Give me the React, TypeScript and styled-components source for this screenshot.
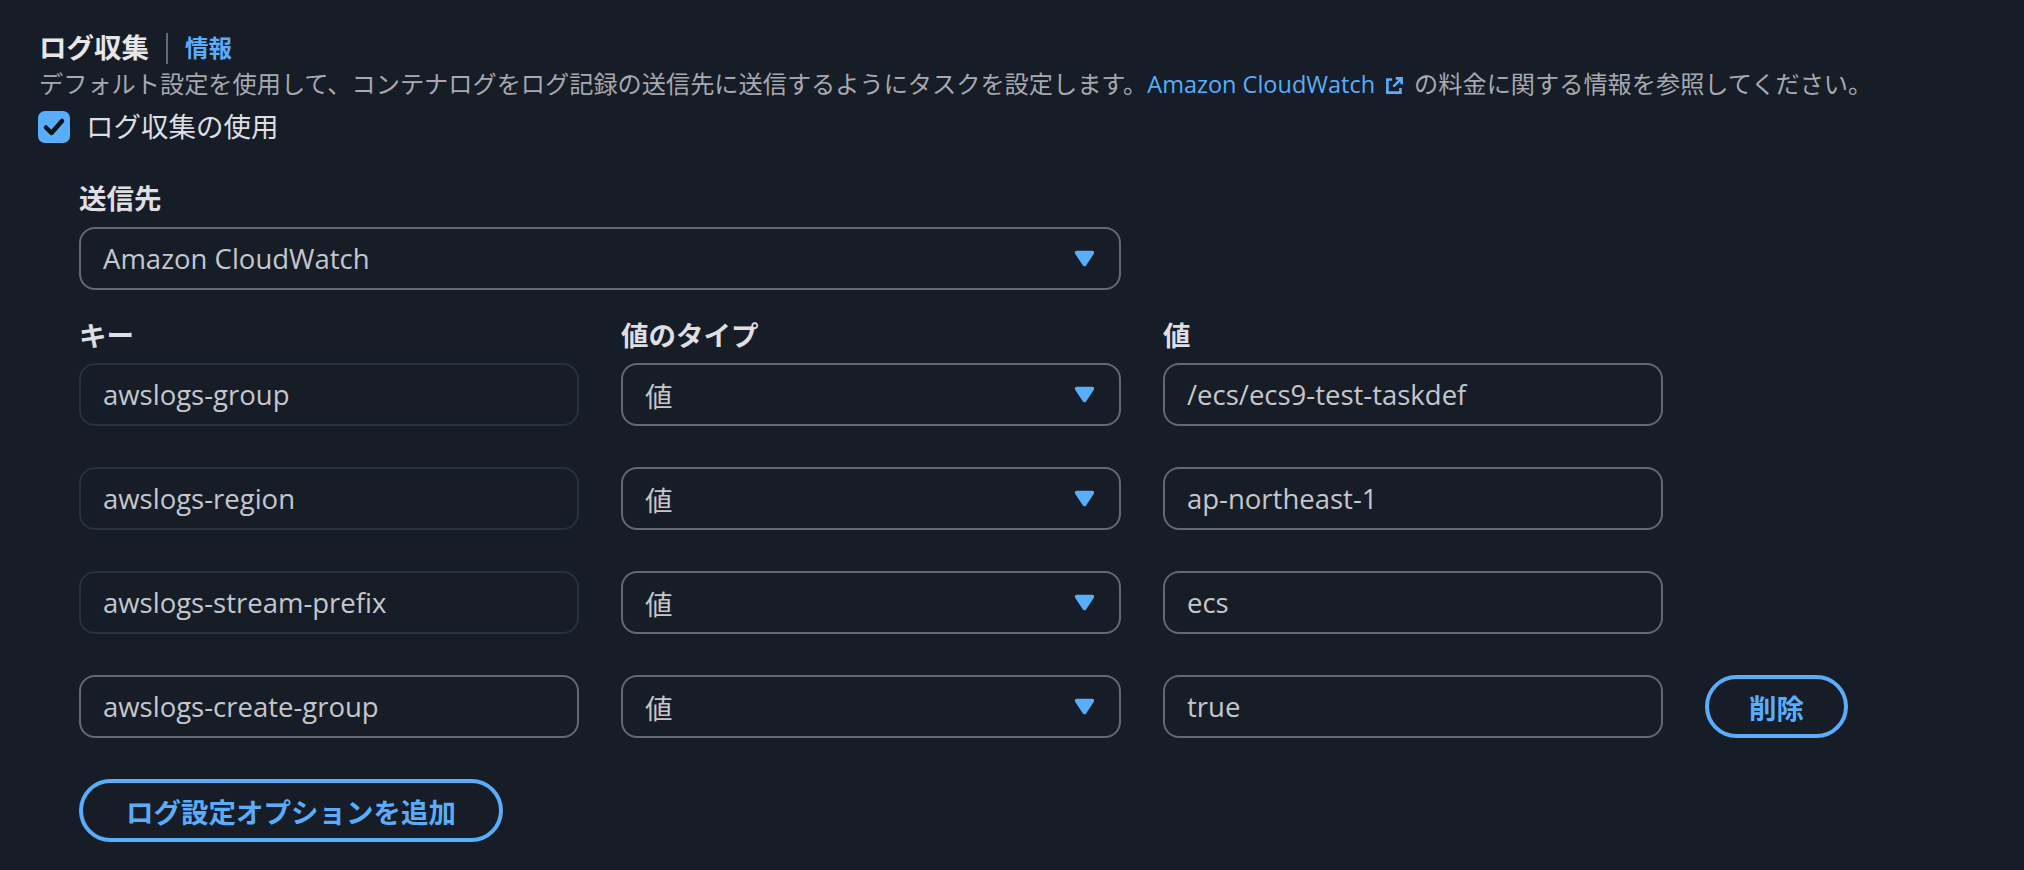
import * as React from 'react'
import styled, { createGlobalStyle } from 'styled-components'

const colors = {
  bg: '#161d26',
  heading: '#e6e6eb',
  label: '#dedee3',
  text: '#c6c6cd',
  secondary: '#a8a8b0',
  border: '#656871',
  borderReadOnly: '#29313c',
  blue: '#58aefc',
  divider: '#5f6b7a',
  check: '#0f141a',
}

const logOptions = [
  { key: 'awslogs-group', value: '/ecs/ecs9-test-taskdef', removable: false },
  { key: 'awslogs-region', value: 'ap-northeast-1', removable: false },
  { key: 'awslogs-stream-prefix', value: 'ecs', removable: false },
  { key: 'awslogs-create-group', value: 'true', removable: true },
]

const CaretDown = () => (
  <CaretIcon viewBox="0 0 16 16" aria-hidden>
    <path d="M4 5h8l-4 6-4-6z" />
  </CaretIcon>
)

const ExternalIcon = () => (
  <ExtIcon viewBox="0 0 16 16" aria-hidden>
    <path d="M9 2h5v5M14 2 7 9M6 3H2v11h11v-4" />
  </ExtIcon>
)

const App = () => (
  <Page>
    <GlobalStyle />
    <HeaderRow>
      <Heading>ログ収集</Heading>
      <InfoDivider />
      <InfoLink>情報</InfoLink>
    </HeaderRow>
    <Description>
      デフォルト設定を使用して、コンテナログをログ記録の送信先に送信するようにタスクを設定します。
      <Link>Amazon CloudWatch</Link>
      <ExternalIcon />
      の料金に関する情報を参照してください。
    </Description>
    <CheckRow>
      <CheckBox>
        <svg viewBox="0 0 32 32" width="32" height="32" aria-hidden>
          <polyline points="8,16.5 13.5,22 24,10" />
        </svg>
      </CheckBox>
      <CheckLabel>ログ収集の使用</CheckLabel>
    </CheckRow>

    <Section>
      <FieldLabel>送信先</FieldLabel>
      <Select wide>
        <span>Amazon CloudWatch</span>
        <CaretDown />
      </Select>

      <LabelGrid>
        <ColumnLabel>キー</ColumnLabel>
        <ColumnLabel>値のタイプ</ColumnLabel>
        <ColumnLabel>値</ColumnLabel>
        <span />
      </LabelGrid>

      <Rows>
        {logOptions.map(opt => (
          <EditorGrid key={opt.key}>
            <Input readOnly={!opt.removable}>{opt.key}</Input>
            <Select>
              <span>値</span>
              <CaretDown />
            </Select>
            <Input>{opt.value}</Input>
            {opt.removable ? <Button>削除</Button> : <span />}
          </EditorGrid>
        ))}
      </Rows>

      <AddButton>ログ設定オプションを追加</AddButton>
    </Section>
  </Page>
)

const GlobalStyle = createGlobalStyle`
  html, body {
    margin: 0;
    background: ${colors.bg};
  }
  body {
    font-family: "Open Sans", "Noto Sans CJK JP", sans-serif;
    color: ${colors.text};
  }
`

const Page = styled.div`
  box-sizing: border-box;
  min-height: 870px;
  padding: 28px 39px 0;
  background: ${colors.bg};
`

const HeaderRow = styled.div`
  display: flex;
  align-items: center;
  height: 40px;
`

const Heading = styled.h2`
  margin: 0;
  font-size: 27.5px;
  font-weight: 700;
  line-height: 40px;
  color: ${colors.heading};
`

const InfoDivider = styled.span`
  width: 2px;
  height: 31px;
  margin: 0 17px 0 17px;
  background: ${colors.divider};
`

const InfoLink = styled.a`
  font-size: 23.5px;
  font-weight: 700;
  line-height: 40px;
  color: ${colors.blue};
`

const Description = styled.div`
  font-size: 24.2px;
  line-height: 32px;
  color: ${colors.secondary};
  white-space: nowrap;
`

const Link = styled.a`
  font-size: 23.5px;
  color: ${colors.blue};
`

const ExtIcon = styled.svg`
  width: 19px;
  height: 19px;
  margin: 0 10px 0 10px;
  vertical-align: -2px;
  fill: none;
  stroke: ${colors.blue};
  stroke-width: 2.2;
`

const CheckRow = styled.div`
  display: flex;
  align-items: center;
  gap: 16px;
  margin-top: 11px;
  height: 32px;
`

const CheckBox = styled.span`
  display: flex;
  width: 32px;
  height: 32px;
  margin-left: -1px;
  border-radius: 7px;
  background: ${colors.blue};

  polyline {
    fill: none;
    stroke: ${colors.check};
    stroke-width: 4.5;
    stroke-linecap: round;
    stroke-linejoin: round;
  }
`

const CheckLabel = styled.span`
  font-size: 27.5px;
  line-height: 32px;
  color: ${colors.label};
`

const Section = styled.div`
  margin-top: 36px;
  padding-left: 40px;
`

const FieldLabel = styled.div`
  font-size: 27.5px;
  font-weight: 700;
  line-height: 40px;
  margin-bottom: 8px;
  color: ${colors.label};
`

const ColumnLabel = styled(FieldLabel)`
  margin-bottom: 7px;
`

const field = `
  box-sizing: border-box;
  display: flex;
  align-items: center;
  height: 63px;
  padding: 0 22px;
  border: 2px solid;
  border-radius: 16px;
  font-size: 27.5px;
  white-space: nowrap;
`

const Select = styled.div<{ wide?: boolean }>`
  ${field}
  justify-content: space-between;
  width: ${p => (p.wide ? '1042px' : 'auto')};
  border-color: ${colors.border};
  color: ${colors.text};
`

const Input = styled.div<{ readOnly?: boolean }>`
  ${field}
  border-color: ${p => (p.readOnly ? colors.borderReadOnly : colors.border)};
  color: ${colors.text};
`

const CaretIcon = styled.svg`
  width: 31px;
  height: 31px;
  margin-right: -3px;
  fill: ${colors.blue};
  stroke: ${colors.blue};
  stroke-width: 2;
  stroke-linejoin: round;
`

const EditorGrid = styled.div`
  display: grid;
  grid-template-columns: 500px 500px 500px auto;
  column-gap: 42px;
  align-items: center;
`

const LabelGrid = styled(EditorGrid)`
  margin-top: 26px;
`

const Rows = styled.div`
  display: flex;
  flex-direction: column;
  gap: 41px;
`

const Button = styled.button`
  box-sizing: border-box;
  justify-self: start;
  height: 63px;
  padding: 0 40px;
  border: 4px solid ${colors.blue};
  border-radius: 32px;
  background: transparent;
  color: ${colors.blue};
  font-family: inherit;
  font-size: 27.5px;
  font-weight: 700;
  white-space: nowrap;
`

const AddButton = styled(Button)`
  margin-top: 41px;
  padding: 0 43px;
`

export default App
